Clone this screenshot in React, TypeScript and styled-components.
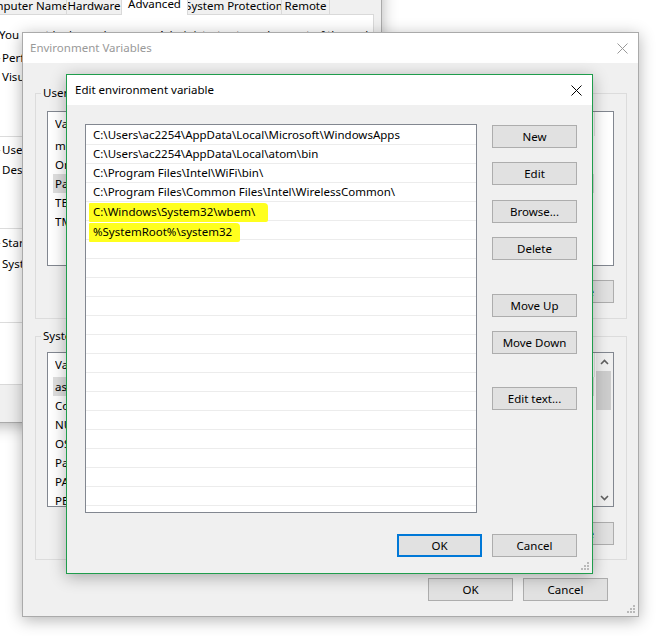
import React from "react";
import styled, { createGlobalStyle } from "styled-components";

const GlobalStyle = createGlobalStyle`
  html, body { margin: 0; padding: 0; background: #fff; }
  body {
    font-family: "Noto Sans", "Segoe UI", sans-serif;
    font-size: 11.5px;
    line-height: 16px;
    color: #000;
  }
  * { box-sizing: border-box; }
`;

const Desktop = styled.div`
  position: relative;
  width: 671px;
  height: 636px;
  overflow: hidden;
  background: #fff;
`;

const Window = styled.div<{ $x: number; $y: number; $w: number; $h: number; $border: string; $z: number }>`
  position: absolute;
  left: ${(p) => p.$x}px;
  top: ${(p) => p.$y}px;
  width: ${(p) => p.$w}px;
  height: ${(p) => p.$h}px;
  z-index: ${(p) => p.$z};
  border: 1px solid ${(p) => p.$border};
  background: #f0f0f0;
  display: flex;
  flex-direction: column;
  box-shadow: 0 3px 15px rgba(0, 0, 0, 0.3);
`;

const TitleBar = styled.div<{ $active?: boolean; $pl: number }>`
  height: 30px;
  flex: none;
  background: #fff;
  display: flex;
  align-items: center;
  justify-content: space-between;
  padding: 0 10px 0 ${(p) => p.$pl}px;
  color: ${(p) => (p.$active ? "#000" : "#999")};
`;

const CloseIcon = ({ color }: { color: string }) => (
  <svg width="11" height="11" viewBox="0 0 11 11">
    <path d="M0.5 0.5 L10.5 10.5 M10.5 0.5 L0.5 10.5" stroke={color} strokeWidth="1" fill="none" />
  </svg>
);

const Grip = styled.svg`
  position: absolute;
  right: 2px;
  bottom: 2px;
`;

const ResizeGrip = () => (
  <Grip width="10" height="10" viewBox="0 0 10 10">
    {[
      [7, 1],
      [7, 4],
      [4, 4],
      [7, 7],
      [4, 7],
      [1, 7],
    ].map(([x, y], i) => (
      <rect key={i} x={x} y={y} width="2" height="2" fill="#b9b9b9" />
    ))}
  </Grip>
);

const Button = styled.button<{ $w?: number; $default?: boolean; $mt?: number }>`
  width: ${(p) => p.$w ?? 85}px;
  height: 23px;
  flex: none;
  margin: ${(p) => p.$mt ?? 0}px 0 0 0;
  padding: 0;
  font: inherit;
  color: #000;
  background: #e1e1e1;
  border: ${(p) => (p.$default ? "2px solid #0078d7" : "1px solid #adadad")};
`;

/* ---------- System Properties (background) ---------- */

const SysBody = styled.div`
  flex: 1;
  display: flex;
  flex-direction: column;
  padding: 1px 7px 0 10px;
`;

const TabStrip = styled.div`
  height: 22px;
  flex: none;
  display: flex;
  align-items: flex-end;
  margin-left: -6px;
  position: relative;
  z-index: 2;
`;

const Tab = styled.div<{ $w: number; $active?: boolean }>`
  width: ${(p) => p.$w}px;
  height: ${(p) => (p.$active ? 23 : 20)}px;
  margin: 0 ${(p) => (p.$active ? -1 : 0)}px ${(p) => (p.$active ? -1 : 0)}px -1px;
  flex: none;
  display: flex;
  justify-content: center;
  align-items: flex-start;
  padding-top: 3px;
  border: 1px solid #d9d9d9;
  border-bottom: none;
  background: ${(p) => (p.$active ? "#fff" : "#f0f0f0")};
  position: relative;
  z-index: ${(p) => (p.$active ? 1 : 0)};
  white-space: nowrap;
  overflow: hidden;
`;

const TabPanel = styled.div`
  height: 371px;
  flex: none;
  background: #fff;
  border: 1px solid #d9d9d9;
  padding: 12px 11px;
  display: flex;
  flex-direction: column;
`;

const Para = styled.div<{ $mt?: number }>`
  margin-top: ${(p) => p.$mt ?? 0}px;
  white-space: nowrap;
`;

const SysGroup = styled.fieldset<{ $mt: number; $h: number }>`
  margin: ${(p) => p.$mt}px 0 0 -4px;
  height: ${(p) => p.$h}px;
  min-width: 0;
  border: 1px solid #dcdcdc;
  padding: 0 8px 0 6px;
  display: flex;
  flex-direction: column;
`;

const SysLegend = styled.legend`
  padding: 0 1px;
  margin-left: -1px;
  line-height: 16px;
`;

const RightRow = styled.div<{ $mt?: number }>`
  display: flex;
  justify-content: flex-end;
  gap: 10px;
  margin-top: ${(p) => p.$mt ?? 0}px;
`;

/* ---------- Environment Variables ---------- */

const EnvBody = styled.div`
  flex: 1;
  display: flex;
  flex-direction: column;
  padding: 22px 11px 0 12px;
`;

const Group = styled.fieldset<{ $mt?: number; $pb: number }>`
  margin: ${(p) => p.$mt ?? 0}px 0 0 0;
  min-width: 0;
  border: 1px solid #dcdcdc;
  padding: 0 12px ${(p) => p.$pb}px 11px;
  display: flex;
  flex-direction: column;
`;

const Legend = styled.legend`
  padding: 0 2px;
  margin-left: -6px;
  line-height: 16px;
`;

const ListView = styled.div<{ $mt: number }>`
  margin-top: ${(p) => p.$mt}px;
  height: 155px;
  flex: none;
  background: #fff;
  border: 1px solid #828790;
  overflow: hidden;
  display: flex;
`;

const ListColumn = styled.div`
  flex: 1;
  min-width: 0;
  display: flex;
  flex-direction: column;
  align-items: flex-start;
`;

const ListHeader = styled.div`
  width: 547px;
  height: 24px;
  flex: none;
  display: flex;
  align-items: center;
  padding-left: 7px;
  border-right: 1px solid #e5e5e5;
`;

const Cell = styled.span<{ $w: number }>`
  width: ${(p) => p.$w}px;
  flex: none;
  overflow: hidden;
  white-space: nowrap;
`;

const ListItem = styled.div<{ $selected?: boolean }>`
  width: 541px;
  height: 19px;
  flex: none;
  display: flex;
  align-items: center;
  margin-left: 5px;
  padding-left: 2px;
  white-space: nowrap;
  background: ${(p) => (p.$selected ? "#dedede" : "transparent")};
`;

const ScrollBar = styled.div`
  width: 17px;
  flex: none;
  background: #f0f0f0;
  display: flex;
  flex-direction: column;
  align-items: center;
`;

const ScrollArrow = styled.div`
  height: 17px;
  width: 17px;
  flex: none;
  display: flex;
  align-items: center;
  justify-content: center;
`;

const ScrollTrack = styled.div`
  flex: 1;
  width: 100%;
  padding: 1px 1px 0 0;
`;

const ScrollThumb = styled.div`
  height: 39px;
  width: 15px;
  background: #cdcdcd;
`;

const Chevron = ({ up }: { up?: boolean }) => (
  <svg width="9" height="6" viewBox="0 0 9 6">
    <path
      d={up ? "M1 5 L4.5 1.5 L8 5" : "M1 1 L4.5 4.5 L8 1"}
      stroke="#606060"
      strokeWidth="1.6"
      fill="none"
    />
  </svg>
);

const EnvFooter = styled.div`
  display: flex;
  justify-content: flex-end;
  gap: 10px;
  margin-top: 18px;
  padding-right: 19px;
`;

/* ---------- Edit environment variable ---------- */

const EditBody = styled.div`
  flex: 1;
  display: grid;
  grid-template-columns: 392px 85px;
  grid-template-rows: 389px auto;
  column-gap: 15px;
  padding: 19px 15px 0 18px;
`;

const PathList = styled.div`
  background: #fff;
  border: 1px solid #828790;
  overflow: hidden;
  padding-top: 1px;
  display: flex;
  flex-direction: column;
`;

const PathRow = styled.div`
  height: 19px;
  flex: none;
  border-bottom: 1px solid #ececec;
  display: flex;
  align-items: center;
  padding-left: 7px;
  white-space: nowrap;
`;

const Marker = styled.span<{ $dy: number; $w: number }>`
  display: inline-flex;
  align-items: center;
  width: ${(p) => p.$w}px;
  height: 19px;
  margin-left: -4px;
  padding-left: 4px;
  background: #ffff1e;
  border-radius: 1px 4px 2px 1px;
  position: relative;
  top: ${(p) => p.$dy}px;
`;

const ButtonColumn = styled.div`
  display: flex;
  flex-direction: column;
  padding-top: 1px;
`;

const EditFooter = styled.div`
  grid-column: 1 / span 2;
  display: flex;
  justify-content: flex-end;
  gap: 10px;
  margin-top: 21px;
`;

const userVars: [string, string, boolean?][] = [
  ["mongo", "C:\\mongodb\\bin"],
  ["OneDrive", "C:\\Users\\ac2254\\OneDrive"],
  ["Path", "C:\\Users\\ac2254\\AppData", true],
  ["TEMP", "%USERPROFILE%\\AppData\\Local\\Temp"],
  ["TMP", "%USERPROFILE%\\AppData\\Local\\Temp"],
];

const sysVars: [string, string, boolean?][] = [
  ["asl.log", "Destination=file", true],
  ["ComSpec", "C:\\Windows\\system32\\cmd.exe"],
  ["NUMBER_OF_PROCESSORS", "4"],
  ["OS", "Windows_NT"],
  ["Path", "C:\\ProgramData\\Oracle\\Java"],
  ["PATHEXT", ".COM;.EXE;.BAT;.CMD"],
  ["PERL5LIB", ""],
  ["PROCESSOR_ARCHITECTURE", "AMD64"],
];

const paths = [
  "C:\\Users\\ac2254\\AppData\\Local\\Microsoft\\WindowsApps",
  "C:\\Users\\ac2254\\AppData\\Local\\atom\\bin",
  "C:\\Program Files\\Intel\\WiFi\\bin\\",
  "C:\\Program Files\\Common Files\\Intel\\WirelessCommon\\",
];

const marked: [string, number, number][] = [
  ["C:\\Windows\\System32\\wbem\\", 1, 179],
  ["%SystemRoot%\\system32", 2, 151],
];

export default function App() {
  return (
    <>
      <GlobalStyle />
      <Desktop>
        {/* System Properties */}
        <Window $x={-24} $y={-40} $w={406} $h={463} $border="#aaaaaa" $z={1}>
          <TitleBar $pl={7}>System Properties</TitleBar>
          <SysBody>
            <TabStrip>
              <Tab $w={87}>Computer Name</Tab>
              <Tab $w={56}>Hardware</Tab>
              <Tab $w={67} $active>
                Advanced
              </Tab>
              <Tab $w={96}>System Protection</Tab>
              <Tab $w={49}>Remote</Tab>
            </TabStrip>
            <TabPanel>
              <Para>You must be logged on as an Administrator to make most of these changes.</Para>
              <SysGroup $mt={7} $h={87}>
                <SysLegend>Performance</SysLegend>
                <Para $mt={3}>Visual effects, processor scheduling, memory usage, and virtual memory</Para>
                <RightRow $mt={20}>
                  <Button $w={75}>Settings...</Button>
                </RightRow>
              </SysGroup>
              <SysGroup $mt={5} $h={87}>
                <SysLegend>User Profiles</SysLegend>
                <Para $mt={4}>Desktop settings related to your sign-in</Para>
                <RightRow $mt={19}>
                  <Button $w={75}>Settings...</Button>
                </RightRow>
              </SysGroup>
              <SysGroup $mt={6} $h={88}>
                <SysLegend>Startup and Recovery</SysLegend>
                <Para $mt={5}>System startup, system failure, and debugging information</Para>
                <RightRow $mt={18}>
                  <Button $w={75}>Settings...</Button>
                </RightRow>
              </SysGroup>
              <RightRow $mt={12}>
                <Button $w={140}>Environment Variables...</Button>
              </RightRow>
            </TabPanel>
            <RightRow $mt={10}>
              <Button $w={75}>OK</Button>
              <Button $w={75}>Cancel</Button>
              <Button $w={75}>Apply</Button>
            </RightRow>
          </SysBody>
        </Window>

        {/* Environment Variables */}
        <Window $x={22} $y={32} $w={617} $h={585} $border="#aaaaaa" $z={2}>
          <TitleBar $pl={7}>
            <span>Environment Variables</span>
            <CloseIcon color="#999" />
          </TitleBar>
          <EnvBody>
            <Group $pb={15}>
              <Legend>User variables for ac2254</Legend>
              <ListView $mt={10}>
                <ListColumn>
                  <ListHeader>
                    <Cell $w={150}>Variable</Cell>
                    <Cell $w={360}>Value</Cell>
                  </ListHeader>
                  {userVars.map(([n, v, s]) => (
                    <ListItem key={n} $selected={s}>
                      <Cell $w={148}>{n}</Cell>
                      <Cell $w={360}>{v}</Cell>
                    </ListItem>
                  ))}
                </ListColumn>
              </ListView>
              <RightRow $mt={14}>
                <Button $w={75}>New...</Button>
                <Button $w={75}>Edit...</Button>
                <Button $w={75}>Delete</Button>
              </RightRow>
            </Group>
            <Group $mt={9} $pb={14}>
              <Legend>System variables</Legend>
              <ListView $mt={8}>
                <ListColumn>
                  <ListHeader>
                    <Cell $w={150}>Variable</Cell>
                    <Cell $w={360}>Value</Cell>
                  </ListHeader>
                  {sysVars.map(([n, v, s]) => (
                    <ListItem key={n} $selected={s}>
                      <Cell $w={148}>{n}</Cell>
                      <Cell $w={360}>{v}</Cell>
                    </ListItem>
                  ))}
                </ListColumn>
                <ScrollBar>
                  <ScrollArrow>
                    <Chevron up />
                  </ScrollArrow>
                  <ScrollTrack>
                    <ScrollThumb />
                  </ScrollTrack>
                  <ScrollArrow>
                    <Chevron />
                  </ScrollArrow>
                </ScrollBar>
              </ListView>
              <RightRow $mt={15}>
                <Button $w={75}>New...</Button>
                <Button $w={75}>Edit...</Button>
                <Button $w={75}>Delete</Button>
              </RightRow>
            </Group>
            <EnvFooter>
              <Button>OK</Button>
              <Button>Cancel</Button>
            </EnvFooter>
          </EnvBody>
          <ResizeGrip />
        </Window>

        {/* Edit environment variable */}
        <Window $x={66} $y={74} $w={527} $h={500} $border="#1f9d4c" $z={3}>
          <TitleBar $active $pl={8}>
            <span>Edit environment variable</span>
            <CloseIcon color="#000" />
          </TitleBar>
          <EditBody>
            <PathList>
              {paths.map((p) => (
                <PathRow key={p}>{p}</PathRow>
              ))}
              {marked.map(([p, dy, w]) => (
                <PathRow key={p}>
                  <Marker $dy={dy} $w={w}>
                    {p}
                  </Marker>
                </PathRow>
              ))}
              {Array.from({ length: 15 }).map((_, i) => (
                <PathRow key={"e" + i} />
              ))}
            </PathList>
            <ButtonColumn>
              <Button>New</Button>
              <Button $mt={14}>Edit</Button>
              <Button $mt={15}>Browse...</Button>
              <Button $mt={14}>Delete</Button>
              <Button $mt={34}>Move Up</Button>
              <Button $mt={14}>Move Down</Button>
              <Button $mt={33}>Edit text...</Button>
            </ButtonColumn>
            <EditFooter>
              <Button $default>OK</Button>
              <Button>Cancel</Button>
            </EditFooter>
          </EditBody>
          <ResizeGrip />
        </Window>
      </Desktop>
    </>
  );
}
